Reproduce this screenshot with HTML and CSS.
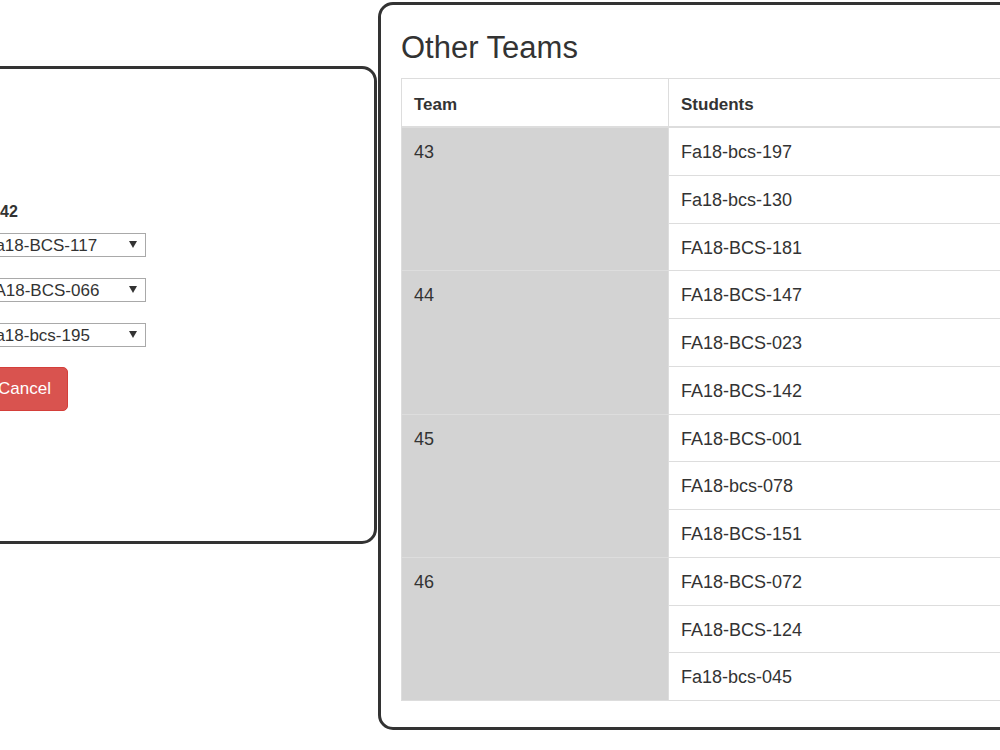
FILE: index.html
```html
<!DOCTYPE html>
<html>
<head>
<meta charset="utf-8">
<link rel="stylesheet" href="styles.css">
</head>
<body>
<div class="wrap">
  <div class="panel panel-left">
    <form class="team-form">
      <div class="team-label">42</div>
      <div class="select-wrap">
        <select class="member-select"><option>Fa18-BCS-117</option></select>
        <svg class="caret" width="8" height="7" viewBox="0 0 8 7"><path d="M0 0H8L4 7Z" fill="#333"/></svg>
      </div>
      <div class="select-wrap">
        <select class="member-select"><option>FA18-BCS-066</option></select>
        <svg class="caret" width="8" height="7" viewBox="0 0 8 7"><path d="M0 0H8L4 7Z" fill="#333"/></svg>
      </div>
      <div class="select-wrap">
        <select class="member-select"><option>Fa18-bcs-195</option></select>
        <svg class="caret" width="8" height="7" viewBox="0 0 8 7"><path d="M0 0H8L4 7Z" fill="#333"/></svg>
      </div>
      <div class="btn-row">
        <button type="button" class="btn btn-danger">Cancel</button>
      </div>
    </form>
  </div>
  <div class="panel panel-right">
    <h3 class="title">Other Teams</h3>
    <table class="teams">
      <thead>
        <tr><th class="col-team">Team</th><th>Students</th></tr>
      </thead>
      <tbody>
        <tr><td class="team" rowspan="3">43</td><td>Fa18-bcs-197</td></tr>
        <tr><td>Fa18-bcs-130</td></tr>
        <tr><td>FA18-BCS-181</td></tr>
        <tr><td class="team" rowspan="3">44</td><td>FA18-BCS-147</td></tr>
        <tr><td>FA18-BCS-023</td></tr>
        <tr><td>FA18-BCS-142</td></tr>
        <tr><td class="team" rowspan="3">45</td><td>FA18-BCS-001</td></tr>
        <tr><td>FA18-bcs-078</td></tr>
        <tr><td>FA18-BCS-151</td></tr>
        <tr><td class="team" rowspan="3">46</td><td>FA18-BCS-072</td></tr>
        <tr><td>FA18-BCS-124</td></tr>
        <tr><td>Fa18-bcs-045</td></tr>
      </tbody>
    </table>
  </div>
</div>
</body>
</html>
```

FILE: styles.css
```css
html, body {
  margin: 0;
  padding: 0;
  overflow: hidden;
  background: #fff;
}
body {
  font-family: "Liberation Sans", Arial, sans-serif;
  color: #333;
  width: 1000px;
  height: 750px;
}
.wrap {
  display: flex;
  align-items: flex-start;
  margin-left: -200px;
  width: max-content;
}
.panel {
  box-sizing: border-box;
  border: 3px solid #333;
  border-radius: 15px;
  background: #fff;
}
.panel-left {
  width: 577px;
  height: 478px;
  margin-top: 66px;
  padding: 134px 20px 20px 179px;
}
.team-form {
  display: flex;
  flex-direction: column;
  align-items: flex-start;
}
.team-label {
  font-weight: bold;
  font-size: 16px;
  line-height: 18px;
  height: 18px;
  margin-left: 18px;
  margin-bottom: 12px;
}
.select-wrap {
  position: relative;
  margin-bottom: 21px;
}
.select-wrap:last-of-type {
  margin-bottom: 20px;
}
.member-select {
  -webkit-appearance: none;
  appearance: none;
  display: block;
  box-sizing: border-box;
  width: 164px;
  height: 24px;
  margin: 0;
  padding: 0 20px 0 2px;
  border: 1px solid #a9a9a9;
  border-radius: 0;
  background: #fff;
  font-family: "Liberation Sans", Arial, sans-serif;
  font-size: 17px;
  color: #333;
}
.caret {
  position: absolute;
  right: 9px;
  top: 8px;
  pointer-events: none;
}
.btn-row {
  display: flex;
  margin-left: -1px;
  margin-top: -1px;
}
.btn {
  font-family: "Liberation Sans", Arial, sans-serif;
  font-size: 17px;
  line-height: 22px;
  padding: 10px 16px;
  border-radius: 5px;
  border: 1px solid #d43f3a;
  cursor: pointer;
}
.btn-danger {
  background: #d9534f;
  color: #fff;
}
.panel-right {
  width: 720px;
  margin-top: 2px;
  margin-left: 1px;
  padding: 26px 20px 26px 20px;
}
.title {
  margin: 0 0 14px 0;
  font-size: 31px;
  line-height: 33px;
  font-weight: normal;
  color: #333;
}
.teams {
  width: 100%;
  border-collapse: separate;
  border-spacing: 0;
  border: 1px solid #ddd;
  border-bottom: none;
  font-size: 18px;
}
.teams th {
  text-align: left;
  font-weight: bold;
  font-size: 17px;
  padding: 15px 12px 10px 12px;
  line-height: 22px;
  border-bottom: 2px solid #ddd;
}
.teams th.col-team {
  width: 242px;
  border-right: 1px solid #ddd;
}
.teams td {
  padding: 13px 12px 11px 12px;
  line-height: 22.75px;
  border-bottom: 1px solid #ddd;
  vertical-align: top;
}
.teams td.team {
  background: #d3d3d3;
  border-right: 1px solid #ddd;
}
```
